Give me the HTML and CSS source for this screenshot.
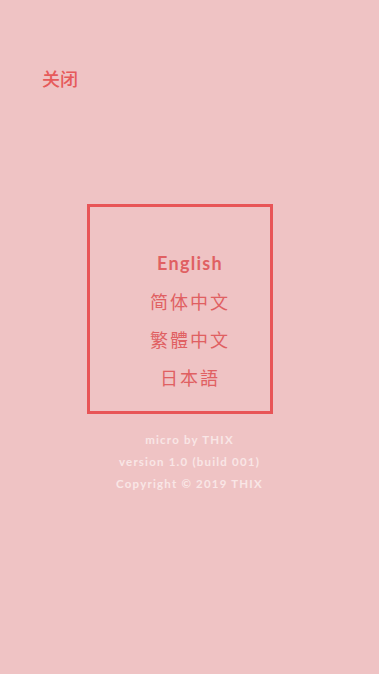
FILE: index.html
```html
<!DOCTYPE html>
<html lang="zh">
<head>
<meta charset="utf-8">
<link rel="stylesheet" href="styles.css">
</head>
<body>
<div class="page">
  <div class="close">关闭</div>
  <div class="box">
    <div class="lang en">English</div>
    <div class="lang sc">简体中文</div>
    <div class="lang tc">繁體中文</div>
    <div class="lang jp">日本語</div>
  </div>
  <div class="footer">
    <div>micro by THIX</div>
    <div>version 1.0 (build 001)</div>
    <div>Copyright © 2019 THIX</div>
  </div>
</div>
</body>
</html>
```
FILE: styles.css
```css
html, body {
  margin: 0;
  padding: 0;
  background: #efc3c4;
}
.page {
  width: 379px;
  height: 674px;
  display: flex;
  flex-direction: column;
  font-family: Lato, "Noto Sans CJK SC", sans-serif;
}
.close {
  margin: 67px 0 0 42px;
  font-size: 18px;
  line-height: 22px;
  font-weight: 500;
  color: #e65a5a;
  font-family: "Noto Sans CJK SC", sans-serif;
}
.box {
  margin: 115px 0 0 87px;
  width: 186px;
  height: 210px;
  border: 3px solid #e85557;
  box-sizing: border-box;
  padding-top: 37px;
  display: flex;
  flex-direction: column;
  align-items: center;
}
.lang {
  line-height: 38px;
  color: #e06062;
  font-size: 18px;
  transform: translateX(10px);
}
.en {
  font-weight: 700;
  letter-spacing: 1.3px;
}
.sc { font-family: "Noto Sans CJK SC", sans-serif; font-weight: 400; letter-spacing: 2px; }
.tc { font-family: "Noto Sans CJK TC", sans-serif; font-weight: 400; letter-spacing: 2px; }
.jp { font-family: "Noto Sans CJK JP", sans-serif; font-weight: 400; letter-spacing: 2px; }
.footer {
  margin-top: 15px;
  display: flex;
  flex-direction: column;
  align-items: center;
  font-size: 11.5px;
  font-weight: 700;
  line-height: 22px;
  letter-spacing: 1.2px;
  color: #f9e6e6;
}
```
